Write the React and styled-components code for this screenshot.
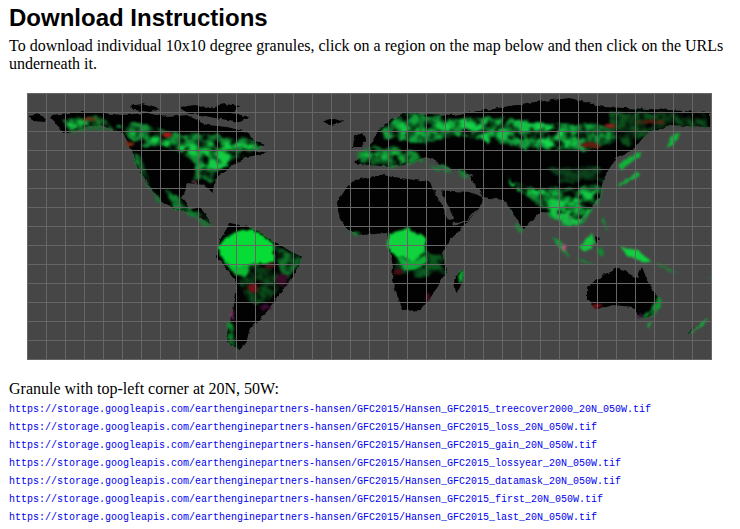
import React from "react";
import styled, { createGlobalStyle } from "styled-components";

const Global = createGlobalStyle`
  html, body { margin: 0; padding: 0; background: #fff; }
  body { font-family: "Liberation Serif", "Times New Roman", serif; color: #000; }
`;

const Page = styled.main`
  display: flex;
  flex-direction: column;
  padding: 4px 8px 0 9px;
`;
const Title = styled.h2`
  margin: 0 0 6px;
  font: bold 24px/27px "Liberation Sans", Arial, sans-serif;
`;
const Intro = styled.p`
  margin: 0;
  font-size: 16px;
  line-height: 18px;
`;
const MapFrame = styled.div`
  display: flex;
  padding: 20px 0 0 18px;
`;
const WorldMap = styled.svg`
  display: block;
  width: 685px;
  height: 267px;
  flex: none;
`;
const GranuleLabel = styled.div`
  margin: 20px 0 3px;
  font-size: 16px;
  line-height: 18px;
`;
const Links = styled.div`
  display: flex;
  flex-direction: column;
`;
const FileLink = styled.a`
  display: block;
  font: 10px/18px "Liberation Mono", "Courier New", monospace;
  color: #0000ee;
  text-decoration: none;
  white-space: nowrap;
`;

const BASE = "https://storage.googleapis.com/earthenginepartners-hansen/GFC2015/Hansen_GFC2015_";
const LAYERS = ["treecover2000", "loss", "gain", "lossyear", "datamask", "first", "last"];

const BLACK = [
  "28,115 36,114 46,118 45,122 34,121",
  "53,115 77,112 100,113 123,115 147,113 167,117 187,115 207,125 227,127 247,132 253,140 265,145 253,150 267,153 247,157 230,167 217,177 213,193 210,190 203,185 187,183 182,197 190,210 200,207 212,224 207,222 195,214 173,208 160,200 147,183 137,167 132,150 123,133 100,125 77,130 63,133 60,128 50,118",
  "130,106 142,104 160,109 150,112 135,110",
  "180,107 195,105 205,108 225,104 240,106 232,113 250,117 240,122 215,118 200,115 185,113",
  "323,120 335,119 344,122 330,125",
  "354,137 362,133 366,140 360,147 353,147",
  "230,223 253,228 273,242 302,257 293,277 273,303 257,323 250,327 247,340 240,350 227,342 232,310 237,283 217,257 220,240",
  "370,177 390,173 400,178 430,182 433,190 452,222 467,222 482,205 467,223 450,240 442,253 447,270 437,288 420,310 403,311 392,280 393,267 387,233 362,235 350,231 340,220 337,203 345,190 355,180",
  "353,163 367,150 380,128 403,113 453,115 498,108 527,103 570,98 603,107 670,110 710,113 710,127 670,125 647,133 633,150 617,157 603,180 600,197 577,223 570,215 560,213 540,212 523,230 510,207 503,200 483,197 470,177 447,167 427,157 405,165 390,167 370,165",
  "433,190 470,192 483,197 482,203 467,220 452,224",
  "453,288 455,277 463,270 462,283 457,293",
  "587,287 603,275 618,268 637,278 642,267 648,282 660,300 653,315 640,318 633,307 613,305 597,310 587,300",
  "688,333 694,327 690,334",
  "595,236 600,238 596,243",
];
const SEAS = [
  "370,172 390,170 426,157 446,167 474,176 447,184 420,180 392,177",
  "434,190 441,190 454,219 449,220",
  "453,222 466,221 452,227",
];
const DIM = [
  { c: "#127a2a", p: "63,119 100,116 118,130 67,133" },
  { c: "#129036", p: "118,124 150,124 173,134 207,134 253,140 266,147 240,156 218,172 212,182 193,178 198,165 187,157 167,147 140,145 125,135" },
  { c: "#108030", p: "133,152 140,155 150,186 162,202 156,200 142,178" },
  { c: "#108030", p: "166,190 180,198 186,208 198,210 213,225 205,225 190,216 172,207" },
  { c: "#0f7028", p: "272,243 302,258 291,277 284,284 280,270 276,255" },
  { c: "#0a4a1a", p: "232,266 250,262 272,268 284,282 270,300 258,304 244,300 240,280" },
  { c: "#0f8a30", p: "228,323 234,322 234,340 240,350 227,342" },
  { c: "#12a23c", p: "380,129 403,113 453,118 498,117 540,122 625,126 616,140 590,150 545,150 510,146 485,140 455,136 430,142 405,142 385,138" },
  { c: "#0c4f1c", p: "610,113 705,114 708,127 670,125 648,133 630,146 610,132" },
  { c: "#108a30", p: "352,155 372,146 412,150 425,160 446,167 426,160 392,167 370,166" },
  { c: "#108a30", p: "425,165 466,170 470,178 445,172" },
  { c: "#0f8a30", p: "350,231 362,234 356,237 343,222" },
  { c: "#109034", p: "520,190 603,186 600,203 580,226 560,226 543,208 530,198" },
  { c: "#0a5a20", p: "396,258 425,250 445,255 447,272 420,277 395,272" },
  { c: "#0a401a", p: "545,168 600,165 604,180 560,182" },
  { c: "#0f9034", p: "510,208 518,224 524,231 519,232" },
  { c: "#0f9a34", p: "600,212 609,232 604,230" },
  { c: "#10902e", p: "570,255 587,262 600,264 587,264" },
  { c: "#0f8a30", p: "597,248 603,246 605,255 599,255" },
  { c: "#0f9a30", p: "652,262 680,274 667,270" },
  { c: "#0f8a30", p: "708,276 711,272 711,279" },
  { c: "#0f8a30", p: "658,296 662,302 652,316 640,318 650,312" },
];
const BRIGHT = [
  { c: "#14cc44", p: "128,131 162,138 182,145 215,143 250,144 264,146 240,153 222,168 210,178 196,174 205,160 180,152 150,140" },
  { c: "#14c040", p: "65,120 85,118 92,124 70,128" },
  { c: "#14d048", p: "447,120 487,122 490,140 470,135 447,136" },
  { c: "#14c444", p: "390,128 447,120 447,134 410,136 390,132" },
  { c: "#16d84a", p: "537,123 578,132 577,146 548,148 535,138" },
  { c: "#14c044", p: "487,120 537,122 540,140 505,140 490,132" },
  { c: "#14b43e", p: "360,153 386,150 412,157 410,165 385,160" },
  { c: "#14c644", p: "543,194 598,191 596,204 578,226 560,222 547,208" },
  { c: "#14c644", p: "507,177 522,186 550,193 546,196 520,192" },
];
const SOLID = [
  { c: "#07dc36", p: "224,239 233,233 253,229 272,243 275,263 248,265 235,268 221,258 218,247" },
  { c: "#0cba33", p: "222,259 236,268 250,265 246,276 235,275" },
  { c: "#10d33d", p: "388,234 408,228 425,237 425,250 414,262 405,258 397,257 388,247" },
  { c: "#0dae36", p: "397,257 414,262 427,254 428,262 414,270 404,270" },
  { c: "#12c73d", p: "578,247 592,233 595,243 587,252" },
  { c: "#10d03f", p: "620,247 637,250 653,263 637,260 627,255" },
  { c: "#10b43a", p: "667,147 671,135 680,133 674,145" },
  { c: "#10b43a", p: "618,165 638,152 642,154 622,170" },
  { c: "#10b43a", p: "617,185 637,171 641,176 619,186" },
  { c: "#10b43a", p: "688,334 708,318 707,322 692,333" },
  { c: "#0f9a33", p: "659,296 662,302 656,314 651,316" },
  { c: "#10b03a", p: "647,324 651,323 649,330" },
  { c: "#0eaa35", p: "460,271 464,270 462,283 458,284" },
  { c: "#0f9f33", p: "552,237 560,240 570,257 562,252" },
];
const SPOTS = [
  ["#c01018", 167, 135, 4, 2.2], ["#7a2a10", 90, 119, 8, 1.6], ["#7a2a10", 130, 144, 4, 2],
  ["#a0181c", 610, 126, 6, 2], ["#6a1c10", 650, 122, 16, 1.5], ["#6a1c10", 590, 145, 10, 3],
  ["#7c0e14", 253, 288, 4, 5], ["#3a0c28", 282, 280, 6, 6], ["#3c0c34", 265, 307, 6, 3],
  ["#4a1018", 270, 266, 5, 3], ["#4a0c18", 398, 272, 5, 3], ["#4c0c2a", 428, 297, 2, 4],
  ["#8a1016", 597, 306, 5, 2], ["#c05080", 564, 248, 2, 4], ["#8a3a70", 232, 316, 1, 5],
  ["#3a0c3a", 640, 316, 3, 2], ["#80505a", 195, 182, 3, 1],
];

const gridX = Array.from({ length: 37 }, (_, i) => 27.5 + 19 * i);
const gridY = Array.from({ length: 15 }, (_, i) => 93.5 + 19 * i);

function Earth() {
  return (
    <WorldMap viewBox="27 93 685 267" role="img" aria-label="Global forest change map">
      <defs>
        <filter id="land" x="-5%" y="-5%" width="110%" height="110%" colorInterpolationFilters="sRGB">
          <feTurbulence type="fractalNoise" baseFrequency="0.16" numOctaves="2" seed="4" result="n" />
          <feDisplacementMap in="SourceGraphic" in2="n" scale="4" xChannelSelector="R" yChannelSelector="G" />
          <feGaussianBlur stdDeviation="0.5" />
        </filter>
        <filter id="mottle" x="-5%" y="-5%" width="110%" height="110%" colorInterpolationFilters="sRGB">
          <feTurbulence type="fractalNoise" baseFrequency="0.1" numOctaves="3" seed="7" result="n" />
          <feDisplacementMap in="SourceGraphic" in2="n" scale="8" xChannelSelector="R" yChannelSelector="G" result="d" />
          <feColorMatrix in="n" type="matrix" values="0 0 0 0 0  0 0 0 0 0  0 0 0 0 0  3.2 0 0 0 -0.9" result="m" />
          <feComposite in="d" in2="m" operator="in" />
          <feGaussianBlur stdDeviation="0.9" />
        </filter>
        <filter id="soft" x="-10%" y="-10%" width="120%" height="120%" colorInterpolationFilters="sRGB">
          <feTurbulence type="fractalNoise" baseFrequency="0.2" numOctaves="2" seed="9" result="n" />
          <feDisplacementMap in="SourceGraphic" in2="n" scale="5" xChannelSelector="R" yChannelSelector="G" />
          <feGaussianBlur stdDeviation="0.9" />
        </filter>
      </defs>
      <rect x="27" y="93" width="685" height="267" fill="#464646" />
      <g filter="url(#land)">
        {BLACK.map((p) => <polygon key={p} points={p} fill="#020202" />)}
        {SEAS.map((p) => <polygon key={p} points={p} fill="#464646" />)}
      </g>
      <g filter="url(#mottle)">
        {DIM.map((g) => <polygon key={g.p} points={g.p} fill={g.c} />)}
        {BRIGHT.map((g) => <polygon key={g.p} points={g.p} fill={g.c} />)}
      </g>
      <g filter="url(#soft)">
        {SOLID.map((g) => <polygon key={g.p} points={g.p} fill={g.c} />)}
        {SPOTS.map(([c, x, y, rx, ry]) => <ellipse key={`${x}-${y}`} cx={x} cy={y} rx={rx} ry={ry} fill={c} />)}
      </g>
      <g stroke="#666" strokeWidth="1">
        {gridX.map((x) => <line key={x} x1={x} x2={x} y1="93" y2="360" />)}
        {gridY.map((y) => <line key={y} y1={y} y2={y} x1="27" x2="712" />)}
      </g>
    </WorldMap>
  );
}

export default function App() {
  return (
    <Page>
      <Global />
      <Title>Download Instructions</Title>
      <Intro>To download individual 10x10 degree granules, click on a region on the map below and then click on the URLs underneath it.</Intro>
      <MapFrame><Earth /></MapFrame>
      <GranuleLabel>Granule with top-left corner at 20N, 50W:</GranuleLabel>
      <Links>
        {LAYERS.map((l) => {
          const url = `${BASE}${l}_20N_050W.tif`;
          return <FileLink key={l} href={url}>{url}</FileLink>;
        })}
      </Links>
    </Page>
  );
}
